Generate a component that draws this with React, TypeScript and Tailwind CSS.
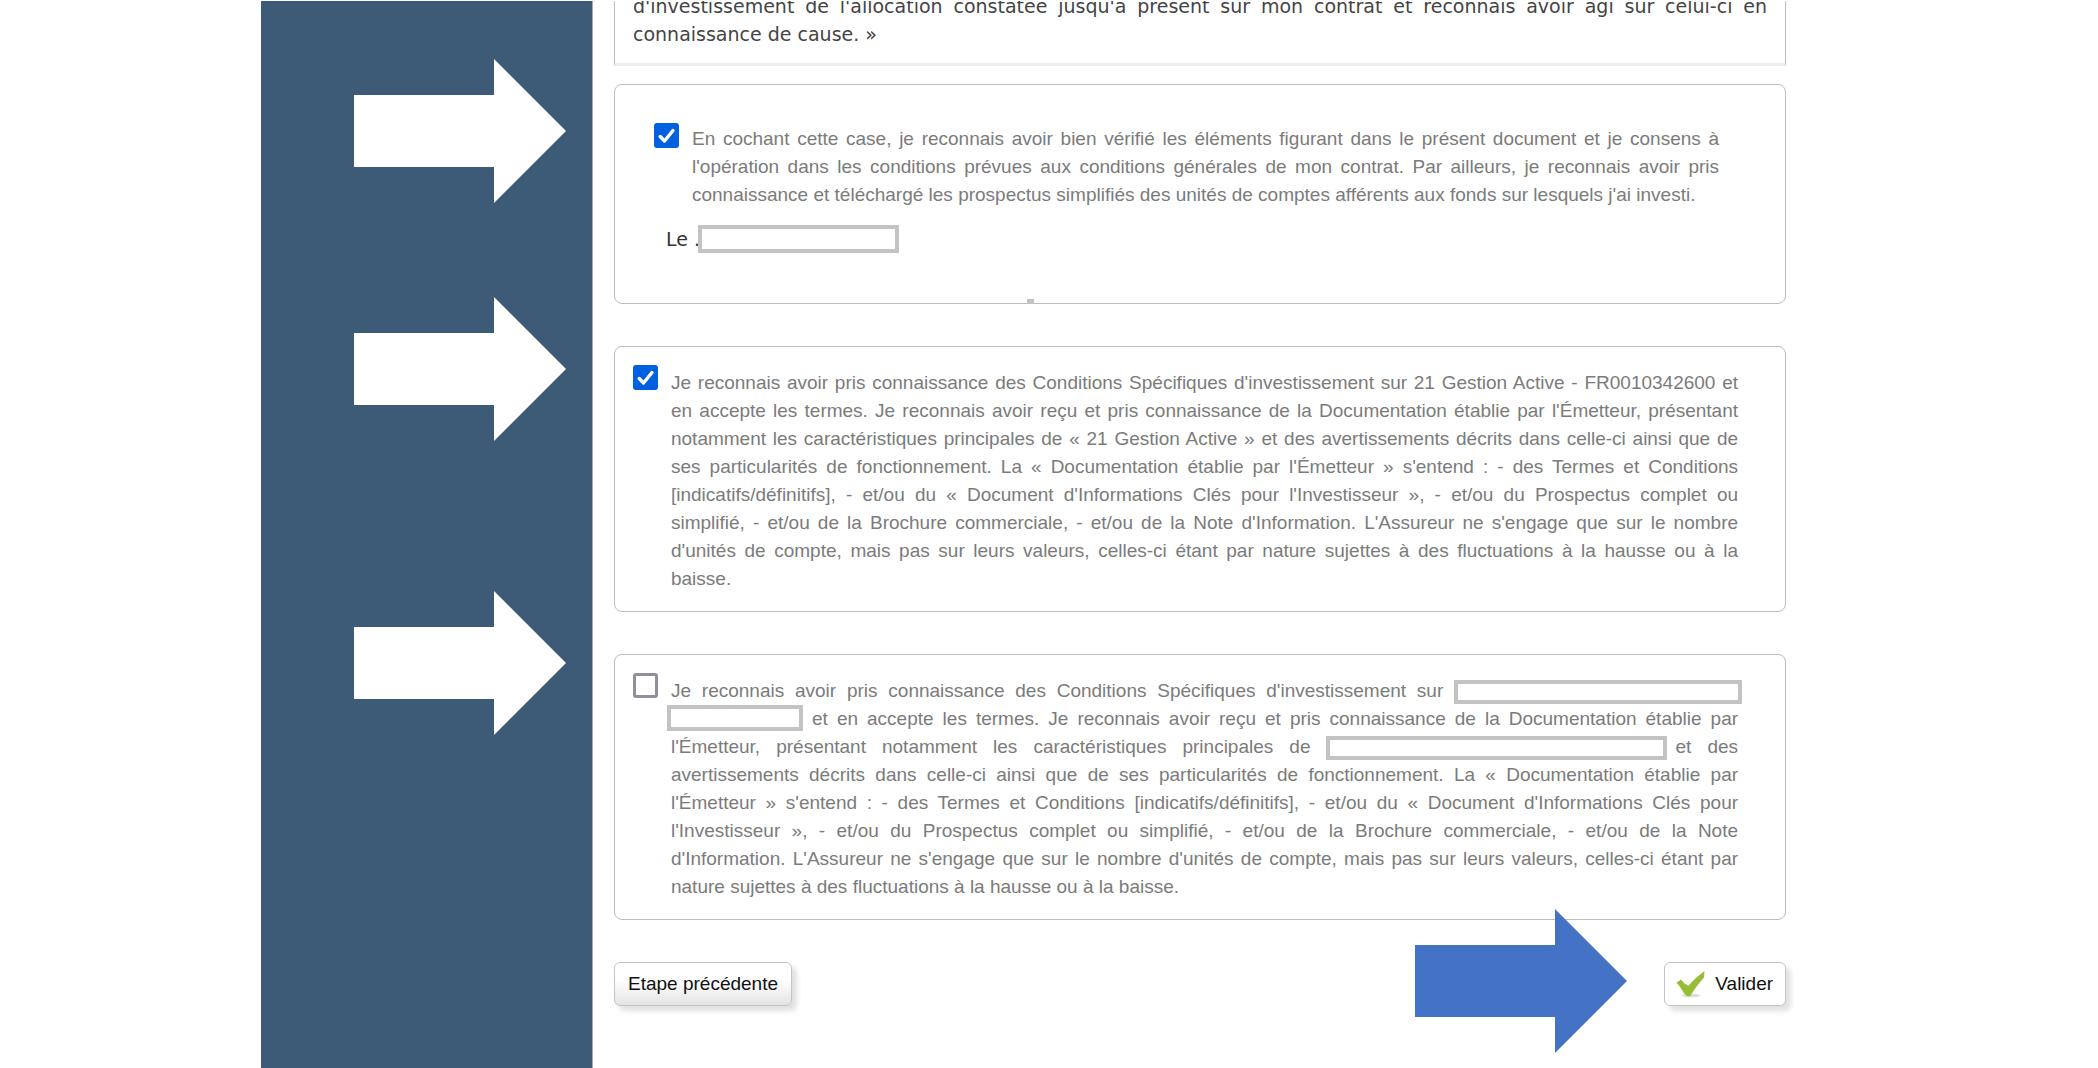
import { useState, type ReactNode } from "react";

const managedFundTerms = [
  "Je reconnais avoir pris connaissance des Conditions Spécifiques d'investissement sur 21 Gestion Active - FR0010342600 et",
  "en accepte les termes. Je reconnais avoir reçu et pris connaissance de la Documentation établie par l'Émetteur, présentant",
  "notamment les caractéristiques principales de « 21 Gestion Active » et des avertissements décrits dans celle-ci ainsi que de",
  "ses particularités de fonctionnement. La « Documentation établie par l'Émetteur » s'entend : - des Termes et Conditions",
  "[indicatifs/définitifs], - et/ou du « Document d'Informations Clés pour l'Investisseur », - et/ou du Prospectus complet ou",
  "simplifié, - et/ou de la Brochure commerciale, - et/ou de la Note d'Information. L'Assureur ne s'engage que sur le nombre",
  "d'unités de compte, mais pas sur leurs valeurs, celles-ci étant par nature sujettes à des fluctuations à la hausse ou à la",
  "baisse.",
];

const consentTerms = [
  "En cochant cette case, je reconnais avoir bien vérifié les éléments figurant dans le présent document et je consens à",
  "l'opération dans les conditions prévues aux conditions générales de mon contrat. Par ailleurs, je reconnais avoir pris",
  "connaissance et téléchargé les prospectus simplifiés des unités de comptes afférents aux fonds sur lesquels j'ai investi.",
];

const Arrow = ({ className }: { className: string }) => (
  <svg viewBox="0 0 212 144" className={`h-36 w-[212px] ${className}`} aria-hidden="true">
    <path d="M0 36H140V0L212 72L140 144V108H0Z" fill="currentColor" />
  </svg>
);

const CheckBox = ({ id, defaultChecked }: { id: string; defaultChecked?: boolean }) => {
  const [checked, setChecked] = useState(!!defaultChecked);
  return (
    <span className="relative block size-[25px] shrink-0">
      <input
        id={id}
        type="checkbox"
        checked={checked}
        onChange={(e) => setChecked(e.target.checked)}
        className="block size-[25px] appearance-none rounded-[3px] border-3 border-[#8f8f9d] bg-white checked:border-[#0060df] checked:bg-[#0060df]"
      />
      {checked && (
        <svg viewBox="0 0 25 25" className="pointer-events-none absolute inset-0" aria-hidden="true">
          <path d="M6.200 13.500L10.500 18L19 7.500" fill="none" stroke="white" strokeWidth="3.400" strokeLinecap="round" strokeLinejoin="round" />
        </svg>
      )}
    </span>
  );
};

const Terms = ({ id, lines }: { id: string; lines: ReactNode[] }) => (
  <label htmlFor={id} className="block min-w-0 flex-1 text-[19px] leading-7 text-[#7b7b7b]">
    {lines.map((line, i) => (
      <span
        key={i}
        className={i < lines.length - 1 ? "block text-justify [text-align-last:justify]" : "block"}
      >
        {line}
      </span>
    ))}
  </label>
);

const Blank = ({ label, className }: { label: string; className: string }) => (
  <input
    type="text"
    aria-label={label}
    className={`border-4 border-[#c3c3c3] bg-white px-1 text-base leading-none outline-none ${className}`}
  />
);

const otherFundTerms = [
  <>
    Je reconnais avoir pris connaissance des Conditions Spécifiques d'investissement sur{" "}
    <Blank label="Support" className="-mr-1 h-6 w-[288px] align-middle" />
  </>,
  <>
    <Blank label="Code ISIN" className="-mt-0.5 mb-0.5 -ml-1 h-[26px] w-[136px] align-middle" /> et en accepte
    les termes. Je reconnais avoir reçu et pris connaissance de la Documentation établie par
  </>,
  <>
    l'Émetteur, présentant notamment les caractéristiques principales de{" "}
    <Blank label="Nom du support" className="-mr-2 h-6 w-[341px] align-middle" /> et des
  </>,
  "avertissements décrits dans celle-ci ainsi que de ses particularités de fonctionnement. La « Documentation établie par",
  "l'Émetteur » s'entend : - des Termes et Conditions [indicatifs/définitifs], - et/ou du « Document d'Informations Clés pour",
  "l'Investisseur », - et/ou du Prospectus complet ou simplifié, - et/ou de la Brochure commerciale, - et/ou de la Note",
  "d'Information. L'Assureur ne s'engage que sur le nombre d'unités de compte, mais pas sur leurs valeurs, celles-ci étant par",
  "nature sujettes à des fluctuations à la hausse ou à la baisse.",
];

const buttonClass =
  "flex h-11 items-center rounded-md border border-[#c4c4c4] text-[19px] text-[#111] shadow-[5px_5px_5px_rgba(0,0,0,0.12)]";

export default function App() {
  return (
    <div className="flex min-h-screen bg-white pt-px pr-[14.87%] pl-[12.44%] font-['Liberation_Sans',Arial,sans-serif]">
      {/* Side band */}
      <aside className="flex w-[332px] shrink-0 flex-col items-end border-r border-[#a8a8a8] bg-[#3d5a76] pt-[58px] pr-[26px] text-white">
        <Arrow className="mb-[94px]" />
        <Arrow className="mb-[150px]" />
        <Arrow className="" />
      </aside>

      <main className="min-w-0 flex-1 pl-[21px]">
        {/* End of the handwritten statement */}
        <section className="h-[65px] overflow-hidden border-x border-b-3 border-x-[#bdbdbd] border-b-[#ececec] px-[18px] font-['DejaVu_Sans',Verdana,sans-serif] text-[19px] leading-7 text-[#444]">
          <p className="-mt-[9px] text-justify [text-align-last:justify]">
            d'investissement de l'allocation constatée jusqu'à présent sur mon contrat et reconnais avoir agi sur celui-ci en
          </p>
          <p>connaissance de cause. »</p>
        </section>

        {/* Consent */}
        <section className="relative mt-[18px] h-[220px] rounded-lg border border-[#bdbdbd] pt-[38px] pr-[66px] pl-[39px]">
          <div className="flex gap-[13px]">
            <CheckBox id="consent" defaultChecked />
            <div className="min-w-0 flex-1 pt-0.5">
              <Terms id="consent" lines={consentTerms} />
            </div>
          </div>
          <div className="mt-4 flex items-center pl-3">
            <label htmlFor="date" className="font-['DejaVu_Sans',Verdana,sans-serif] text-[19px] leading-7 text-[#333]">
              Le .
            </label>
            <input id="date" type="text" className="-ml-0.5 h-7 w-[201px] border-4 border-[#c3c3c3] bg-white px-1 text-base outline-none" />
          </div>
          <span className="absolute -bottom-px left-[412px] h-[5px] w-[7px] bg-[#c3c3c3]" />
        </section>

        {/* 21 Gestion Active */}
        <section className="mt-[42px] flex gap-[13px] rounded-lg border border-[#bdbdbd] pt-[18px] pr-[47px] pb-[18px] pl-[18px]">
          <CheckBox id="managed-fund" defaultChecked />
          <div className="min-w-0 flex-1 pt-1">
            <Terms id="managed-fund" lines={managedFundTerms} />
          </div>
        </section>

        {/* Other fund */}
        <section className="mt-[42px] flex gap-[13px] rounded-lg border border-[#bdbdbd] pt-[18px] pr-[47px] pb-[18px] pl-[18px]">
          <CheckBox id="other-fund" />
          <div className="min-w-0 flex-1 pt-1">
            <Terms id="other-fund" lines={otherFundTerms} />
          </div>
        </section>

        <div className="mt-[42px] flex items-start justify-between">
          <button type="button" className={`${buttonClass} bg-linear-to-b from-white from-40% to-[#e4e4e4] px-[13px]`}>
            Etape précédente
          </button>
          <div className="relative">
            <Arrow className="absolute -top-[53px] right-[159px] max-w-none text-[#4472c4]" />
            <button type="button" className={`${buttonClass} gap-[9px] bg-white pr-3 pl-[11px]`}>
              <svg viewBox="0 0 30 28" className="h-7 w-[30px]" aria-hidden="true">
                <ellipse cx="15" cy="25.500" rx="9" ry="1.800" fill="#000" opacity="0.14" />
                <path d="M0.500 12.500L3.500 10.800L5 9.500L8.500 13.500L12.500 15.800C17 10 22.500 5.500 28.500 1L28 7.500C23 13 18.500 19 14.500 25.500L12 26.500L8.500 24C6 20 4 16.500 0.500 12.500Z" fill="#96bd33" />
              </svg>
              Valider
            </button>
          </div>
        </div>
      </main>
    </div>
  );
}
